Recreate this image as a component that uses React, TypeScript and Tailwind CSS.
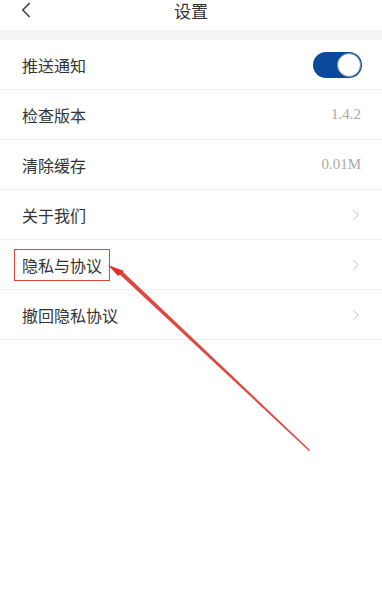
import { ChevronLeft, ChevronRight } from "lucide-react";

type Row = {
  label: string;
  kind: "toggle" | "value" | "link";
  value?: string;
  marked?: boolean;
};

const rows: Row[] = [
  { label: "推送通知", kind: "toggle" },
  { label: "检查版本", kind: "value", value: "1.4.2" },
  { label: "清除缓存", kind: "value", value: "0.01M" },
  { label: "关于我们", kind: "link" },
  { label: "隐私与协议", kind: "link", marked: true },
  { label: "撤回隐私协议", kind: "link" },
];

const Toggle = () => (
  <div className="w-[49px] h-[26px] rounded-full bg-[#0b4a9b] flex items-center justify-end pr-[1px]">
    <div className="w-[24px] h-[24px] rounded-full bg-white border border-[#7a8fb0]" />
  </div>
);

const SettingRow = ({ r }: { r: Row }) => (
  <div className="h-[50px] flex items-center justify-between pl-[22px] pr-[20px] border-b border-[#f0f0f0]">
    <span
      className={`text-[16px] text-[#333] leading-none ${
        r.marked ? "border border-[#d9463c] -ml-[8px] px-[7px] py-[7px]" : ""
      }`}
    >
      {r.label}
    </span>
    {r.kind === "toggle" && <Toggle />}
    {r.kind === "value" && (
      <span className="text-[15px] text-[#a8a8a8] font-['Liberation_Serif',serif] pr-[1px]">{r.value}</span>
    )}
    {r.kind === "link" && <ChevronRight size={18} strokeWidth={1.1} className="text-[#b0b0b0] -mr-[3px]" />}
  </div>
);

export default function App() {
  return (
    <div className="relative w-[382px] h-[600px] bg-white overflow-hidden font-['Noto_Sans_CJK_SC',sans-serif]">
      <div className="h-[30px] relative flex items-start justify-center pt-[1px]">
        <ChevronLeft size={26} strokeWidth={1.6} className="absolute left-[13px] -top-[3px] text-[#444]" />
        <span className="text-[17px] text-[#333] leading-[20px]">设置</span>
      </div>
      <div className="h-[10px] bg-[#f5f5f5]" />
      <div>
        {rows.map((r) => (
          <SettingRow key={r.label} r={r} />
        ))}
      </div>
      <svg className="absolute left-0 top-0 pointer-events-none" width="382" height="600">
        <polygon points="108,265 124,271 118,276" fill="#e0302a" />
        <polygon points="116,271 121,270 310,450 309,451" fill="#d9342c" opacity="0.9" />
      </svg>
    </div>
  );
}
